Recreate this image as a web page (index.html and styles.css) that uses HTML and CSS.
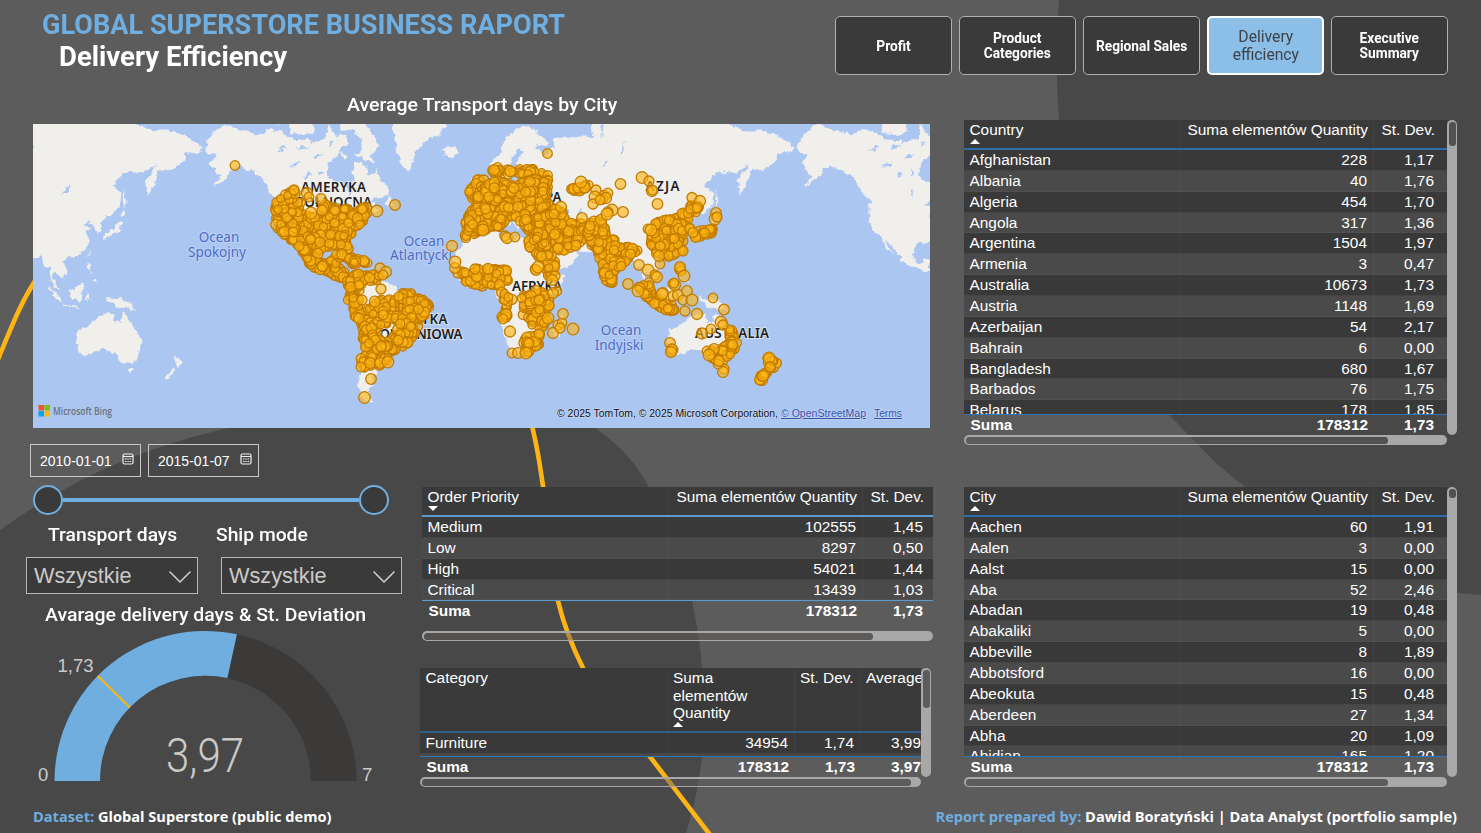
FILE: index.html
```html
<!DOCTYPE html>
<html lang="pl">
<head>
<meta charset="utf-8">
<title>Delivery Efficiency</title>
<link rel="stylesheet" href="styles.css">
</head>
<body>
<div class="page">
  <svg class="backdrop" viewBox="0 0 1481 833" aria-hidden="true">
    <path class="blob" d="M0 530C70 480 140 449 220 430C320 405 390 385 450 386C510 388 560 405 598 430C622 447 636 464 649 487C671 523 686 560 692 600Q700 640 702 668Q709 720 702 757Q697 800 686 833H0Z"/>
    <path class="blob" d="M1059 0Q1055 80 1059 120C1072 240 1105 345 1169 415L1213 460Q1230 476 1246 487C1320 550 1390 590 1481 595V0Z"/>
    <path class="ribbon" d="M-3 362C18 310 24 298 38 276C140 130 480 170 533 430C540 460 541 475 544 492C549 540 552 575 558 601C563 622 570 642 583 668C600 700 628 730 651 758L711 836"/>
  </svg>

  <header class="top">
    <div class="titles">
      <h1 class="brand"><span class="fit">GLOBAL SUPERSTORE BUSINESS RAPORT</span></h1>
      <h2 class="sub"><span class="fit">Delivery Efficiency</span></h2>
    </div>
    <nav class="nav">
      <a class="tab"><span>Profit</span></a>
      <a class="tab"><span>Product<br>Categories</span></a>
      <a class="tab"><span>Regional Sales</span></a>
      <a class="tab active"><span>Delivery<br>efficiency</span></a>
      <a class="tab"><span>Executive<br>Summary</span></a>
    </nav>
  </header>

  <main class="content">
    <div class="left">
      <h3 class="map-title"><span class="fit">Average Transport days by City</span></h3>
      <svg class="map" viewBox="33 124 897 304">
        <defs>
          <filter id="coast" x="0" y="0" width="100%" height="100%">
            <feTurbulence type="fractalNoise" baseFrequency="0.18" numOctaves="3" seed="4"/>
            <feDisplacementMap in="SourceGraphic" scale="6" xChannelSelector="R" yChannelSelector="G"/>
          </filter>
        </defs>
        <rect class="sea" x="33" y="124" width="897" height="304"/>
        <g id="land" filter="url(#coast)"></g>
        <g class="ocean">
          <text x="219" y="241.500">Ocean</text><text x="217" y="256.500">Spokojny</text>
          <text x="424" y="245.500">Ocean</text><text x="421" y="260">Atlantycki</text>
          <text x="621" y="334.500">Ocean</text><text x="619" y="349.500">Indyjski</text>
        </g>
        <g class="continent">
          <text x="333.500" y="191.500" textLength="65">AMERYKA</text><text x="334" y="206.500" textLength="76">PÓŁNOCNA</text>
          <text x="415" y="323.500" textLength="65">AMERYKA</text><text x="417" y="338.500" textLength="91">POŁUDNIOWA</text>
          <text x="535" y="201.500">EUROPA</text><text x="537" y="290.500" textLength="50">AFRYKA</text>
          <text x="662.500" y="190.500" textLength="34">AZJA</text><text x="732" y="337.500" textLength="74">AUSTRALIA</text>
        </g>
        <g id="dots"></g>
        <g>
          <rect x="38.500" y="405" width="5.500" height="5.500" fill="#f35325"/><rect x="44.500" y="405" width="5.500" height="5.500" fill="#81bc06"/>
          <rect x="38.500" y="411" width="5.500" height="5.500" fill="#05a6f0"/><rect x="44.500" y="411" width="5.500" height="5.500" fill="#ffba08"/>
          <text class="bing" x="53" y="414.500" textLength="59" lengthAdjust="spacingAndGlyphs">Microsoft Bing</text>
        </g>
        <g class="copyright">
          <text x="557" y="417" textLength="221" lengthAdjust="spacingAndGlyphs">© 2025 TomTom, © 2025 Microsoft Corporation,</text>
          <text class="link" x="781" y="417" textLength="85" lengthAdjust="spacingAndGlyphs">© OpenStreetMap</text>
          <text class="link" x="874" y="417" textLength="28" lengthAdjust="spacingAndGlyphs">Terms</text>
        </g>
      </svg>

      <div class="lower">
        <section class="controls">
          <div class="dates">
            <div class="date"><span>2010-01-01</span><svg class="cal" viewBox="0 0 12 12"><rect x="1" y="1" width="10" height="10" rx="1.500"/><path d="M1 3.500H11M3 6h1.500M5.300 6h1.500M7.600 6h1.500M3 8.500h1.500M5.300 8.500h1.500M7.600 8.500h1.500"/></svg></div>
            <div class="date"><span>2015-01-07</span><svg class="cal" viewBox="0 0 12 12"><rect x="1" y="1" width="10" height="10" rx="1.500"/><path d="M1 3.500H11M3 6h1.500M5.300 6h1.500M7.600 6h1.500M3 8.500h1.500M5.300 8.500h1.500M7.600 8.500h1.500"/></svg></div>
          </div>
          <div class="slider"><i class="knob"></i><i class="rail"></i><i class="knob"></i></div>
          <div class="labels"><span class="label-a"><b class="fit">Transport days</b></span><span class="label-b"><b class="fit">Ship mode</b></span></div>
          <div class="selects">
            <div class="select first"><span>Wszystkie</span><svg viewBox="0 0 22 14"><path d="M0.500 1.500L11 12L21.500 1.500"/></svg></div>
            <div class="select second"><span>Wszystkie</span><svg viewBox="0 0 22 14"><path d="M0.500 1.500L11 12L21.500 1.500"/></svg></div>
          </div>
          <h3 class="gauge-title"><span class="fit">Avarage delivery days &amp; St. Deviation</span></h3>
          <svg class="gauge" viewBox="26 626 376 160">
            <path fill="#3b3a38" d="M54.500 781A151 150 0 0 1 356.500 781H311A105.500 105 0 0 0 100 781Z"/>
            <path fill="#6faede" d="M54.500 781A151 150 0 0 1 236.900 634.200L227.400 678A105.500 105 0 0 0 100 781Z"/>
            <path stroke="#fdb515" stroke-width="2" d="M97.800 676L130 707.500"/>
            <g class="gauge-text">
              <text x="57.500" y="671.500" textLength="36">1,73</text>
              <text x="38" y="781">0</text><text x="362" y="781">7</text>
            </g>
            <text class="gauge-value" x="166" y="771.500" textLength="78" lengthAdjust="spacingAndGlyphs">3,97</text>
          </svg>
        </section>

        <section class="mid">
          <div class="grid priority">
            <div class="row head"><span>Order Priority<i class="down"></i></span><span>Suma elementów Quantity</span><span>St. Dev.</span></div>
            <div class="body">
              <div class="row"><span>Medium</span><span>102555</span><span>1,45</span></div>
              <div class="row"><span>Low</span><span>8297</span><span>0,50</span></div>
              <div class="row"><span>High</span><span>54021</span><span>1,44</span></div>
              <div class="row"><span>Critical</span><span>13439</span><span>1,03</span></div>
            </div>
            <div class="row total"><span>Suma</span><span>178312</span><span>1,73</span></div>
            <div class="bar"><i></i></div>
          </div>
          <div class="framed category-frame">
            <div class="grid category">
              <div class="row head"><span>Category</span><span>Suma<br>elementów<br>Quantity<i class="up"></i></span><span>St. Dev.</span><span>Average</span></div>
              <div class="body">
                <div class="row"><span>Furniture</span><span>34954</span><span>1,74</span><span>3,99</span></div>
              </div>
              <div class="row total"><span>Suma</span><span>178312</span><span>1,73</span><span>3,97</span></div>
              <div class="bar"><i></i></div>
            </div>
            <div class="bar vertical"><i></i></div>
          </div>
        </section>
      </div>
    </div>

    <div class="right">
      <div class="framed country-frame">
        <div class="grid country">
          <div class="row head"><span>Country<i class="up"></i></span><span>Suma elementów Quantity</span><span>St. Dev.</span></div>
          <div class="body">
            <div class="row"><span>Afghanistan</span><span>228</span><span>1,17</span></div>
            <div class="row"><span>Albania</span><span>40</span><span>1,76</span></div>
            <div class="row"><span>Algeria</span><span>454</span><span>1,70</span></div>
            <div class="row"><span>Angola</span><span>317</span><span>1,36</span></div>
            <div class="row"><span>Argentina</span><span>1504</span><span>1,97</span></div>
            <div class="row"><span>Armenia</span><span>3</span><span>0,47</span></div>
            <div class="row"><span>Australia</span><span>10673</span><span>1,73</span></div>
            <div class="row"><span>Austria</span><span>1148</span><span>1,69</span></div>
            <div class="row"><span>Azerbaijan</span><span>54</span><span>2,17</span></div>
            <div class="row"><span>Bahrain</span><span>6</span><span>0,00</span></div>
            <div class="row"><span>Bangladesh</span><span>680</span><span>1,67</span></div>
            <div class="row"><span>Barbados</span><span>76</span><span>1,75</span></div>
            <div class="row"><span>Belarus</span><span>178</span><span>1,85</span></div>
          </div>
          <div class="row total"><span>Suma</span><span>178312</span><span>1,73</span></div>
          <div class="bar"><i></i></div>
        </div>
        <div class="bar vertical"><i></i></div>
      </div>
      <div class="framed city-frame">
        <div class="grid city">
          <div class="row head"><span>City<i class="up"></i></span><span>Suma elementów Quantity</span><span>St. Dev.</span></div>
          <div class="body">
            <div class="row"><span>Aachen</span><span>60</span><span>1,91</span></div>
            <div class="row"><span>Aalen</span><span>3</span><span>0,00</span></div>
            <div class="row"><span>Aalst</span><span>15</span><span>0,00</span></div>
            <div class="row"><span>Aba</span><span>52</span><span>2,46</span></div>
            <div class="row"><span>Abadan</span><span>19</span><span>0,48</span></div>
            <div class="row"><span>Abakaliki</span><span>5</span><span>0,00</span></div>
            <div class="row"><span>Abbeville</span><span>8</span><span>1,89</span></div>
            <div class="row"><span>Abbotsford</span><span>16</span><span>0,00</span></div>
            <div class="row"><span>Abeokuta</span><span>15</span><span>0,48</span></div>
            <div class="row"><span>Aberdeen</span><span>27</span><span>1,34</span></div>
            <div class="row"><span>Abha</span><span>20</span><span>1,09</span></div>
            <div class="row"><span>Abidjan</span><span>165</span><span>1,20</span></div>
          </div>
          <div class="row total"><span>Suma</span><span>178312</span><span>1,73</span></div>
          <div class="bar"><i></i></div>
        </div>
        <div class="bar vertical"><i></i></div>
      </div>
    </div>
  </main>

  <footer class="foot">
    <p><em>Dataset:</em> Global Superstore (public demo)</p>
    <p><em>Report prepared by:</em> Dawid Boratyński | Data Analyst (portfolio sample)</p>
  </footer>
</div>
<script src="map.js"></script>
</body>
</html>
```

FILE: styles.css
```css
* { box-sizing: border-box; }
body { margin: 0; background: #5c5c5c; color: #fff; font-family: "Liberation Sans", Arial, sans-serif; }
h1, h2, h3, p { margin: 0; }
.page { width: 1481px; height: 833px; overflow: hidden; position: relative; isolation: isolate; }
.backdrop { position: absolute; inset: 0; z-index: -1; width: 1481px; height: 833px; }
.blob { fill: #484848; }
.ribbon { fill: none; stroke: #fdb515; stroke-width: 4.6; }
.fit { display: inline-block; transform-origin: 0 50%; white-space: nowrap; }

.top { display: flex; justify-content: space-between; height: 90px; padding: 0 33px 0 42px; }
.titles { padding-top: 8px; font-family: Roboto, sans-serif; }
.brand { font-size: 28px; line-height: 33px; font-weight: 700; color: #6faee0; }
.brand .fit { transform: scaleX(.968); }
.sub { font-size: 28px; line-height: 32px; font-weight: 700; padding-left: 17px; }
.sub .fit { transform: scaleX(.983); }
.nav { display: flex; gap: 7px; padding-top: 16px; }
.tab { width: 117px; height: 59px; border: 1px solid #b0b0b0; border-radius: 5px; background: #3a3a3a; display: flex; align-items: center; justify-content: center; text-align: center; font: 700 14px/15px Roboto, sans-serif; }
.tab span { transform: scaleX(.98); padding-top: 1px; }
.tab.active { background: #8cbfe8; border: 2px solid #fff; color: #3c4248; font-weight: 400; font-size: 16px; line-height: 18px; }
.tab.active span { padding-top: 0; }

.content { display: flex; height: 706px; }
.left { width: 964px; }
.map-title { font: 500 18px/24px Roboto, sans-serif; padding: 3px 0 0 347px; height: 34px; }
.map-title .fit { transform: scaleX(1.084); }
.map { display: block; width: 897px; height: 304px; margin-left: 33px; }
.sea, .water { fill: #abc6f1; }
.land { fill: #f0efec; }
.ocean text, .continent text { text-anchor: middle; font-family: "Noto Sans", "Open Sans", sans-serif; font-size: 13.500px; paint-order: stroke; stroke-width: 2px; }
.ocean text { fill: #4d6cc4; stroke: #bad0f5; }
.continent text { fill: #1e1e1e; stroke: rgba(240,240,240,.6); font-size: 13.400px; font-weight: 600; }
.dot { fill: #fdb515; fill-opacity: .62; stroke: #c27c00; stroke-width: 1.3; }
.bing { font: 600 10px "Open Sans", sans-serif; fill: #6b7178; }
.copyright text { font: 10px "Liberation Sans", Arial, sans-serif; fill: #111; paint-order: stroke; stroke: #c6d8f6; stroke-width: 1.200px; }
.copyright .link { fill: #3450a8; text-decoration: underline; }

.lower { display: flex; }
.controls { width: 420px; padding: 16px 0 0 26px; }
.dates { display: flex; gap: 7px; padding-left: 4px; height: 33px; }
.date { width: 111px; height: 33px; border: 1px solid #c8c8c8; display: flex; align-items: center; padding: 0 6px 0 9px; font-size: 14px; justify-content: space-between; }
.cal { width: 12px; height: 12px; fill: none; stroke: #eee; stroke-width: 1.2; margin-bottom: 4px; }
.slider { display: flex; align-items: center; width: 356px; height: 30px; margin: 8px 0 0 7px; }
.knob { width: 30px; height: 30px; border: 2px solid #6faee0; border-radius: 50%; background: #3a3a3a; }
.rail { flex: 1; height: 4px; background: #6faee0; }
.labels { display: flex; font: 500 18px/24px Roboto, sans-serif; margin-top: 8px; height: 24px; padding-left: 22px; }
.labels b { font-weight: 500; transform: scaleX(1.07); }
.label-a { width: 168px; }
.selects { display: flex; margin-top: 10px; gap: 23px; }
.select { height: 37px; border: 1px solid #b8b8b8; background: #3a3a3a; display: flex; align-items: center; justify-content: space-between; padding: 0 6px 0 7px; font-size: 21.700px; color: #cbcac8; }
.first { width: 172px; }
.second { width: 181px; }
.select svg { width: 22px; height: 14px; fill: none; stroke: #d0d0d0; stroke-width: 1.5; margin-top: 3px; }
.gauge-title { font: 500 18px/24px Roboto, sans-serif; padding-left: 19px; margin-top: 9px; height: 23px; }
.gauge-title .fit { transform: scaleX(1.08); }
.gauge { display: block; width: 376px; height: 160px; }
.gauge-text { font-size: 18.500px; fill: #cbcac8; }
.gauge-value { font: 300 48.500px Roboto, sans-serif; fill: #cbcac8; }

.mid { padding-top: 59px; width: 514px; }
.grid { font-size: 15.400px; }
.row { display: grid; grid-template-columns: var(--cols); height: 20.860px; line-height: 20px; }
.row > span { text-align: right; padding-right: 6px; border-right: 1px solid rgba(255,255,255,.045); white-space: nowrap; }
.row > span:first-child { text-align: left; padding-left: 5.500px; }
.row > span:last-child { border-right: 0; }
.head { background: #3a3a3a; height: 30px; border-bottom: 2px solid var(--line); line-height: 19px; }
.head > span { padding-right: 5px; }
.up, .down { display: block; width: 0; height: 0; border: 5.500px solid transparent; border-top: 0; border-bottom: 5.500px solid #fff; }
.down { border-bottom: 0; border-top: 5.500px solid #fff; }
.body { overflow: hidden; }
.body .row { background: #4a4a4a; border-bottom: 1px solid #505050; }
.body .row:nth-child(odd) { background: #393939; border-bottom-color: #454545; }
.total { border-top: 1px solid #2e75b6; font-weight: 700; height: 20px; line-height: 20px; }
.total > span { border: 0; }
.total > span:first-child { padding-left: 6.500px; }
.bar { height: 10px; border-radius: 5px; overflow: hidden; display: flex; }
.bar i { display: block; border-radius: 5px; margin: 1.500px; background: rgba(96,94,92,.45); box-shadow: 0 0 0 500px #a8a8a8; }

.priority { --cols: 247px 194px 66px 4px; --line: #5a9bd0; margin-left: 2px; width: 511px; height: 181px; }
.priority .body { height: 83px; }
.priority .total { border-top-color: #5a9bd0; }
.priority .bar { margin-top: 11px; }
.priority .bar i { width: 449px; }
.framed { display: flex; }
.category-frame { height: 119px; width: 511px; }
.category { --cols: 248px 127px 66px 66px; --line: #2f5f8a; width: 501px; overflow: hidden; }
.category .head { height: 65px; line-height: 17.500px; padding-top: 1px; }
.category .head > span { text-align: left; padding-left: 5px; }
.category .head > span:first-child { padding-left: 5.500px; }
.category .body { height: 23px; border-bottom: 2px solid #484848; }
.category .total { height: 21px; }
.category .bar i { width: 489px; }
.category-frame .vertical { height: 109px; }
.category-frame .vertical i { height: 38px; }
.bar.vertical { width: 10px; flex-direction: column; flex: none; }

.right { width: 494px; padding-top: 30px; }
.country, .city { --cols: 217px 193px 66px; --line: #2e6ca8; width: 483px; }
.country-frame { height: 367px; }
.country .body { height: 264px; }
.country .total, .city .total { height: 21px; }
.country .bar i, .city .bar i { width: 422px; }
.country-frame .vertical { height: 315px; }
.country-frame .vertical i { height: 24px; }
.city .body { height: 239px; }
.city-frame .vertical { height: 290px; }
.city-frame .vertical i { height: 9px; }

.foot { display: flex; justify-content: space-between; padding: 10px 24px 0 33px; font: 700 14.600px/20px "Open Sans", "Noto Sans", sans-serif; }
.foot em { font-style: normal; color: #6faee0; }
```

FILE: map.js
```js
const NS = 'http://www.w3.org/2000/svg';
const WORLD = 592, LON0 = 481.5, EQ = 294, R = WORLD / (2 * Math.PI);

// Mercator projection of a flat [lon, lat, lon, lat, ...] list to an SVG path
function outline(flat, shift) {
  let d = '';
  for (let i = 0; i < flat.length; i += 2) {
    const x = LON0 + shift + flat[i] * WORLD / 360;
    const y = EQ - R * Math.asinh(Math.tan(flat[i + 1] * Math.PI / 180));
    d += (i ? 'L' : 'M') + x.toFixed(1) + ' ' + y.toFixed(1);
  }
  return d + 'Z';
}

const lands = [
  [-168,65.6,-166,68.3,-163,69.5,-156,71.3,-150,70.5,-141,69.7,-135,69,-128,70.5,-120,69.5,-114,68,-108,68,-100,67.8,-95,68,-93,71.5,-88,68.5,-85,69.5,-82,69,-81.5,67,-86,66.3,-87,64.5,-93,62,-94.5,58.8,-92.5,57,-88,56.5,-82.3,55.2,-82,53,-79.5,51.3,-79,54.5,-76.7,57,-78.5,59,-77.5,62.4,-73,62,-70,61,-69.5,59,-66,58.7,-64,60.3,-61.5,57,-57.5,54.6,-55.7,52.5,-60,50.2,-66,50.2,-70,47,-65,49,-64.3,46.3,-60,46,-66,43.6,-67,44.7,-70,43.5,-70.5,41.8,-74,40.5,-76,37,-76,35,-81,31.5,-80,26.5,-81,25.2,-82.7,28,-84,30,-89.5,30.2,-94,29.5,-97.3,27.5,-97.7,22,-95.5,18.7,-91.5,18.5,-90.3,21,-87,21.4,-88.3,16,-83.3,15,-83.7,11,-81,8.8,-79.5,9.5,-77.3,8.5,-78,7.5,-80.5,7.3,-83,8.4,-85.8,10.5,-87.5,13,-94,16.1,-97,15.8,-101,17.3,-105.5,20.3,-105.5,22.5,-109,26,-112.7,30,-114.7,31.6,-112,27,-109.5,23.2,-112,25,-114.5,28,-117,32.4,-120.6,34.5,-122.4,37.3,-124.3,40.3,-124,46,-124.5,48.3,-122.5,48,-123,49.2,-128,51.5,-130.5,55,-134,58,-139.5,59.6,-147,61,-151.5,60.5,-153,58.7,-158,56.3,-164,54.6,-158,58.4,-162,58.7,-162,60,-166,61.7,-161,64.4,-165,64.5],
  [-56,73,-53,69,-52,66,-50,63,-48,61,-44,59.9,-42,62,-40,65,-33,68,-26,69,-22,71,-20,73],
  [-90,73,-85,70,-78,70,-73,68,-73,65,-78,64.5,-70,62.7,-65,62,-68,64,-62,66.5,-68,70,-75,73],
  [-117,71,-116,69.5,-105,69,-101,70,-105,73,-117,73], [-126,73,-124,71,-118,73],
  [-87,65,-81,64,-84,63], [-59,47.7,-56,51.5,-53,47.5], [-24,65.5,-22,66.4,-16,66.5,-13.7,65,-18,63.4,-22.5,64],
  [-84.5,22,-80,23,-74.5,20.2,-78,20], [-74,19.7,-69,19,-72,18],
  [-77.3,8.5,-75,11,-72,12,-70,11.5,-64,10.5,-60,8.5,-52,4.5,-50,0,-44,-2.5,-40,-3,-35.3,-5.5,-35,-9,-39,-13,-39,-18,-41,-22,-45,-23.5,-48.5,-26,-49,-29,-53,-33.5,-58,-34.3,-57,-36.5,-62,-39,-65,-41,-63.5,-42.5,-67,-46,-66,-48,-69,-51,-68.5,-52.5,-65.5,-54.7,-70,-55,-74,-51.5,-75.5,-47,-73,-42,-73.5,-37,-71.5,-30,-70.3,-18.5,-76,-14,-81,-6,-80.5,-2.5,-80,.5,-77.5,3],
  [-6,35.8,10,37.3,11,34,15,32.3,20,31,22,32.8,32,31.3,35,28,37,22,39,16,43,11.5,51,12,48,5,41,-2,39.5,-7,40.7,-15,35,-20,35.3,-24,32.5,-27,27,-33.5,20,-34.8,18,-33,15,-27,12,-18,13.7,-11,9,-1,9.5,4,4,6.3,-8,4.4,-13,8.5,-17,14.5,-17,21,-13,27.7,-9.7,31],
  [49.3,-12,50.3,-15.5,47,-25,44,-25,44,-17],
  [-9,43,-1.8,43.4,-1.2,46,-4.7,48.3,1.5,50,4,52,8.5,54,8.2,57,10.5,57.5,10,55,14,54,19,54.5,21,57,24,57.3,23.5,59.2,30,60,22,60.3,21.5,63,25.3,65,22,65.8,17.3,62,17,60.5,18.5,60,16.5,57,14.3,55.5,12.8,55.6,11,59,8,58,5.2,59.5,5,62,11,64.5,14,68,20,70,26,71,31,70.3,41,67.5,40,66.2,33,66.7,38,64,44,66.5,44,68.4,54,68.5,60,69,68,68.5,67,71.3,67,74,73,74,73,68,75,72,82,73.5,100,76,113,74,130,72,140,73,152,71,160,70,170,70,180,69,190.5,66.2,187,64.6,180,65,179,62.5,171,60,163.5,59.8,162,56.5,157,51.2,156,57,163,61.7,155,59.3,143,59.3,135.5,54.8,141,52.5,140.5,48,135,43.5,130.8,42.3,127.5,39.5,129.3,36,126.5,34.5,125,38,121.5,39,121.5,40.8,118,39,122.4,37,119.3,35,121.8,31,119.5,25.8,114,22.3,108,21.5,105.8,19,109,12.5,105,8.8,102.5,12,100.5,13.4,99.3,10,104,1.4,101,3,98.3,8,97.5,16.5,94.3,16,91.5,22.4,87,21.3,80.3,15.5,80,12,77.5,8.1,73,17,72.5,21,70,21,67,24.8,57.5,25.7,50,30,48,30,51.5,24.5,56.3,26,59.5,22.5,52,16,43.7,12.7,39,21,34.8,29,34.3,31.3,36,36.5,28,36.7,26.5,40,36,41.5,41.5,42,37,45,39,47.2,34,46,33.5,44.5,30.7,46.3,27.7,42.5,28.5,41,23.5,40,24,38,22,36.7,19.5,40.5,19.5,42,13.5,45.5,12.5,44,18.3,40,16,38,15.5,40,10,44,3.5,43.2,0,39.5,-2,36.8,-6,36.2,-9,37],
  [-5,50,1,51.3,-2,56,-4,58.5,-6,57,-3,54], [-10,52,-6,52.3,-6,55,-9,54],
  [130.5,31.5,135,33.6,140.5,35.5,141.5,40,140,40.5,136.5,37,131,34.5], [140,42,145,43.5,142,45.3],
  [142.5,46,144,49,142.5,54.3], [120.5,22,122,25,121,25], [80,6.3,81.7,7,80,9.6],
  [95.5,5.5,104,-2,105.5,-5.8,101,-2.5], [109,1.5,114,4.5,117,7,118.7,5,117,1,116,-4,110.5,-2.8],
  [105.5,-6.3,114.5,-7.8,114.5,-8.7,106,-7.4], [119.5,-5,119.5,0,124,1.2,121,.5,123,-4.5,121,-2.5],
  [120.3,16,121,18.5,122.3,18,121.5,14,124,12.7], [123,8,125.7,9.7,126.3,6.5],
  [131,-.8,135,-3.3,141,-2.6,147,-6,150.5,-10.5,143,-8.5,138,-8,133,-4],
  [114,-22,122,-18,126,-14,131,-11.7,136.5,-12,135.7,-15,140.5,-17.5,142.3,-10.8,145.5,-15,149,-20.5,153.3,-26,152,-32.5,150,-37.5,146,-39,140.5,-38,137.8,-33,135,-34.7,131,-31.5,124,-33.5,118,-35,115,-34,113.5,-26],
  [145,-41,148.2,-41,147,-43.5], [173,-34.8,178.3,-37.8,175.3,-41.5,174,-38.5], [172.7,-40.7,174,-42,168.5,-46.5,166.7,-45.8]
];

const waters = [
  [47,43,51,46.5,53,45,51,43,54,40,53.5,37,49,37.5,49.3,41], [-92,47,-88,48.8,-84.5,47,-88,46.7],
  [-88,42,-87,45.8,-85,45], [-83,43,-84,46,-80,45], [-83,41.5,-79,43], [-117,61,-110,62.7,-112,61.2],
  [-125,65,-120,66.7,-118,66], [-98,50.5,-99,53.5,-97,53.7], [104,51.5,109.8,55.5,109,53], [58.5,44,61,46.3,60.5,43.8],
  [73.5,45.5,79,46.7,75,46.8], [30,60.3,33,60.5,31,61.7], [32,-2.5,34,0,32,.4], [84,64,88,68.5,86,64.5],
  [-108,57,-103,59,-106,59.4], [-102,63,-96,64.4,-101,64.2], [-112,65.5,-104,66.3,-110,66.8], [-99,58,-96,59,-98,59.7],
  [-93,66,-90,67.5,-92,67.5], [-76,55,-70,55.5,-73,54.4], [-104,67,-97,68.3,-103,68.8], [73,61,77,63,75,61]
];

const land = document.getElementById('land');
for (const [set, cls] of [[lands, 'land'], [waters, 'water']]) {
  const p = document.createElementNS(NS, 'path');
  p.setAttribute('class', cls);
  p.setAttribute('d', [-WORLD, 0, WORLD].map(s => set.map(f => outline(f, s)).join('')).join(''));
  land.append(p);
}

let seed = 71;
const rnd = () => (seed = (seed * 16807) % 2147483647) / 2147483647;
const dots = document.getElementById('dots');
function dot(x, y, r) {
  const c = document.createElementNS(NS, 'circle');
  c.setAttribute('class', 'dot');
  c.setAttribute('cx', x.toFixed(1));
  c.setAttribute('cy', y.toFixed(1));
  c.setAttribute('r', r.toFixed(1));
  dots.append(c);
}
function inside(x, y, p) {
  let hit = false;
  for (let i = 0, j = p.length - 2; i < p.length; j = i, i += 2) {
    if ((p[i + 1] > y) !== (p[j + 1] > y) && x < (p[j] - p[i]) * (y - p[i + 1]) / (p[j + 1] - p[i + 1]) + p[i]) hit = !hit;
  }
  return hit;
}

// market clusters: cell size per city, then the outline of the area
const clusters = [
  [9,[276,201,286,194,294,190,302,204,304,216,318,216,324,204,335,208,352,210,366,207,369,218,352,232,345,240,351,250,346,253,337,246,322,248,318,256,306,252,290,240,276,228,274,214]],
  [8,[298,244,306,250,318,252,317,262,326,263,333,256,338,266,346,274,354,282,346,283,332,274,310,266]],
  [7,[333,253,346,255,358,260,370,261,369,264,352,264,342,258]],
  [9,[347,281,356,274,380,275,380,282,364,281,360,292,350,299]],
  [10,[347,298,358,296,362,310,378,322,376,336,364,334,354,314]],
  [20,[374,300,400,298,396,322,384,328,366,312]],
  [10,[396,293,410,293,424,300,430,306,424,316,418,328,410,340,402,348,392,352,384,350,378,344,392,338,400,324,404,310]],
  [14,[362,338,372,334,388,346,388,363,364,368,360,360,366,350]],
  [10,[467,192,476,178,484,180,482,192,474,200]],
  [14,[488,170,500,166,512,172,524,168,532,168,552,176,548,182,534,176,518,174,492,174]],
  [7.5,[474,200,486,186,500,179,514,186,530,178,550,180,547,190,549,206,538,210,528,218,510,216,500,228,482,230,466,240,463,226,470,212,474,208]],
  [9,[516,218,530,220,552,212,560,208,566,220,584,224,586,240,572,249,560,252,548,238,524,229]],
  [10,[526,238,542,230,548,246,556,264,555,278,548,276,546,262,532,252]],
  [9,[584,226,600,218,606,232,618,244,640,250,630,256,618,270,612,284,604,280,600,262,592,246]],
  [10,[572,186,588,183,590,188,578,192,570,190]],
  [11,[454,262,462,272,470,270,504,268,514,280,498,286,484,286,470,284,458,276]],
  [16,[500,290,514,300,508,306,508,318,500,318,502,302]],
  [12,[520,296,540,288,551,302,546,316,552,320,540,328,522,322,524,306]],
  [11,[522,338,542,333,540,344,530,352,512,355,526,348]],
  [8,[652,232,656,222,668,219,680,216,690,204,700,206,688,222,682,232,684,248,672,258,656,254,649,242]],
  [7,[684,222,694,232,712,227,716,232,696,238,690,230]],
  [9,[638,286,650,282,654,296,664,303,676,307,674,311,660,309,648,300]],
  [8,[728,328,734,332,738,346,730,356,722,362,712,358,708,350,720,350,730,342]],
  [8,[766,355,778,363,768,376,762,382,758,380,768,368]]
];
for (const [cell, p] of clusters) {
  const xs = p.filter((_, i) => i % 2 === 0), ys = p.filter((_, i) => i % 2);
  const x0 = Math.min(...xs), x1 = Math.max(...xs), y0 = Math.min(...ys), y1 = Math.max(...ys);
  const tries = (x1 - x0) * (y1 - y0) / cell * 1.5;
  for (let k = 0; k < tries; k++) {
    const x = x0 + rnd() * (x1 - x0), y = y0 + rnd() * (y1 - y0);
    if (inside(x, y, p)) dot(x, y, 3.8 + rnd() * 1.6);
  }
}

const singles = [
  235,165.5, 395,205, 377,211, 294,190, 307,193, 309,197, 321,199, 311,213, 380,268, 386,272, 383,275, 371,379, 364.500,397.500,
  381,289, 370,363, 361,367, 380,363, 388,362, 362,300, 452,246, 547.500,153.500, 620.500,184, 642,177.500, 649,181, 652,191,
  652.500,190, 657.500,204, 581,182, 596,190, 604,196, 608,193, 602,199, 595,197, 593,204, 606,198, 600,200, 623,212, 612,210, 608,212,
  601,220, 590,226, 582,218, 607,214, 555,209, 561,207, 554,214, 494,170, 483,230, 505,236, 507,238, 515,237, 455,268, 455,262,
  475,269, 488,269, 535,269, 536,270, 538,267, 555,276, 552,280, 557,291, 553,293, 548,318, 558,325, 553,333, 562,323, 563,314,
  573,329, 560,328, 510,331.500, 512,353, 518,353, 526,353, 539,334, 506,314, 503,319, 639,265, 648,270, 655,275, 657,277, 660,264,
  628,284, 638,291, 692,197.500, 700,201, 697,208, 716,213, 715,219, 717,217, 680,269, 681,271, 680,267, 684,276, 673,284, 675,285,
  674,283, 663,293, 662,294, 673,296, 678,295, 683,300, 687,291, 692,300, 685,311, 697,314, 713,298, 724,309.500, 721,322,
  723,325, 702,333.500, 711,329, 670,343, 672,350, 672,349, 671,352, 707,351, 714,349, 709,355, 724,369, 723,372, 718,364,
  719,361, 769,358, 770,367, 763,376, 648,229, 656,224, 651,230, 683,251, 659,256
];
for (let i = 0; i < singles.length; i += 2) dot(singles[i], singles[i + 1], 4.8 + (i % 5) * .25);
```
